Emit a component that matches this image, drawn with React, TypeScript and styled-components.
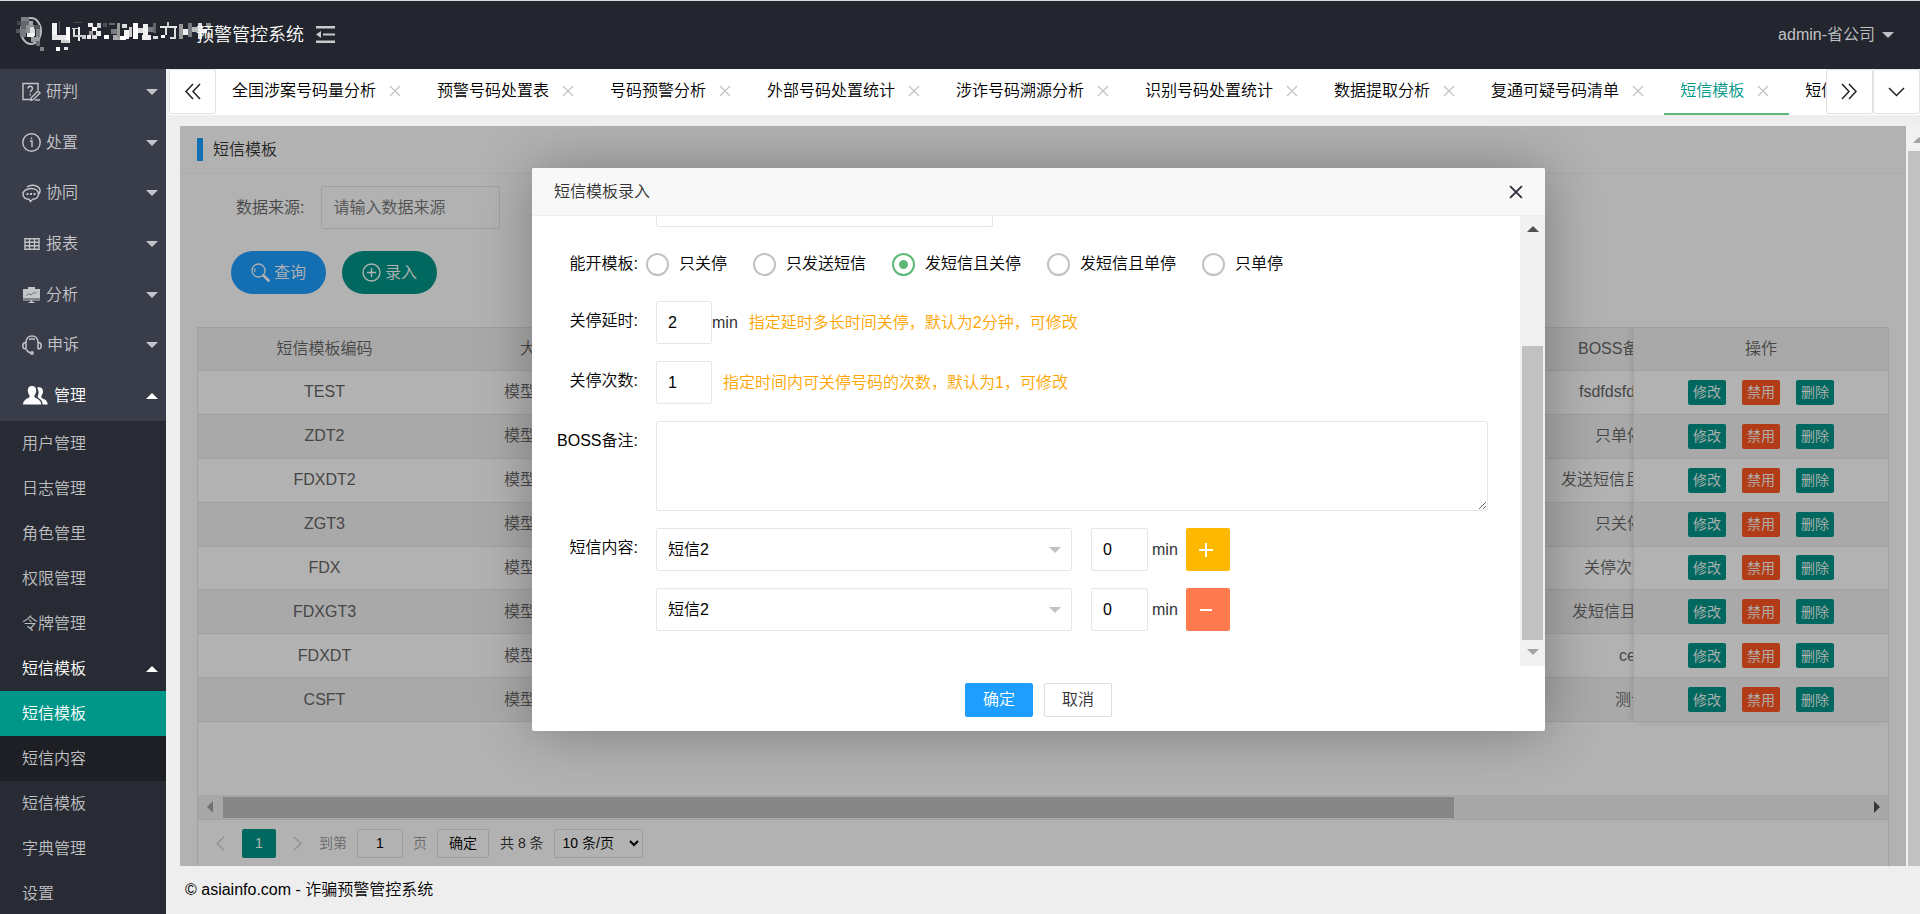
import React, { useState } from 'react';
import styled, { createGlobalStyle, css } from 'styled-components';

const GlobalStyle = createGlobalStyle`
  *, *::before, *::after { box-sizing: border-box; }
  html, body { margin: 0; padding: 0; }
  body {
    background: #eee;
    color: #000;
    font-family: "Liberation Sans", "Noto Sans CJK SC", sans-serif;
    font-size: 16px;
    font-weight: 350;
    line-height: 24px;
  }
  button, input, select, textarea { font: inherit; color: inherit; margin: 0; }
  button { cursor: pointer; }
  a { color: inherit; text-decoration: none; }
  ul { list-style: none; margin: 0; padding: 0; }
`;

/* ---------- frame ---------- */

const Page = styled.div`
  display: flex;
  flex-direction: column;
  height: 100vh;
  overflow: hidden;
`;

const Header = styled.header`
  flex: none;
  display: flex;
  align-items: center;
  height: 69px;
  padding: 0 26px 0 16px;
  border-top: 1px solid #d9dedd;
  background: #23262e;
  color: #fff;
`;

const Brand = styled.h1`
  display: flex;
  align-items: center;
  margin: 0;
  font-size: 18px;
  font-weight: 350;
  line-height: 27px;
  svg { margin-right: -17px; }
`;

const FoldButton = styled.button`
  display: flex;
  margin-left: 12px;
  padding: 0;
  border: 0;
  background: none;
  color: #c9cacc;
`;

const UserButton = styled.button`
  display: flex;
  align-items: center;
  gap: 7px;
  margin-left: auto;
  padding: 0;
  border: 0;
  background: none;
  color: #c1c2c4;
`;

const Caret = styled.span<{ $up?: boolean; $size?: number }>`
  width: 0;
  height: 0;
  border: ${p => p.$size ?? 6}px solid transparent;
  ${p =>
    p.$up
      ? css`border-top-width: 0; border-bottom-color: currentColor;`
      : css`border-bottom-width: 0; border-top-color: currentColor;`}
`;

const Main = styled.div`
  flex: 1;
  display: flex;
  min-height: 0;
`;

/* ---------- sidebar ---------- */

const Sidebar = styled.nav`
  flex: none;
  width: 166px;
  overflow: hidden;
  background: #282b33;
`;

const GroupList = styled.ul`
  display: grid;
  grid-auto-rows: 1fr;
  height: 354px;
  margin-top: -2px;
  background: #393d49;
`;

const navItem = css`
  display: flex;
  align-items: center;
  width: 100%;
  padding: 0 8px 0 22px;
  border: 0;
  background: none;
`;

const GroupButton = styled.button<{ $open?: boolean }>`
  ${navItem}
  height: 100%;
  gap: 5px;
  color: ${p => (p.$open ? '#fff' : '#c4c5c8')};
  ${Caret} { margin-left: auto; }
`;

const SubLink = styled.a<{ $tone?: 'active' | 'deep' | 'open' }>`
  ${navItem}
  height: 45px;
  color: ${p => (p.$tone === 'active' || p.$tone === 'open' ? '#fff' : '#bebfc1')};
  background: ${p => (p.$tone === 'active' ? '#009688' : p.$tone === 'deep' ? '#1e1f24' : 'none')};
  ${Caret} { margin-left: auto; }
`;

/* ---------- tabs ---------- */

const Workspace = styled.div`
  flex: 1;
  display: flex;
  flex-direction: column;
  min-width: 0;
  border-left: 3px solid #f0f0f0;
`;

const TabBar = styled.div`
  flex: none;
  display: flex;
  height: 46px;
  background: #fff;
`;

const TabControl = styled.button`
  flex: none;
  display: flex;
  align-items: center;
  justify-content: center;
  width: 47px;
  height: 45px;
  padding: 0;
  border: 1px solid #e2e2e2;
  border-radius: 2px;
  background: #fff;
  color: #222;
`;

const TabStrip = styled.ul`
  flex: 1;
  display: flex;
  min-width: 0;
  overflow: hidden;
`;

const Tab = styled.li<{ $active?: boolean }>`
  flex: none;
  display: flex;
  align-items: center;
  gap: 13px;
  padding: 0 20px 0 16px;
  white-space: nowrap;
  color: ${p => (p.$active ? '#009688' : '#000')};
  border-bottom: 2px solid ${p => (p.$active ? '#5fb878' : 'transparent')};
`;

const TabClose = styled.button`
  display: flex;
  padding: 0;
  border: 0;
  background: none;
  color: #c2c2c2;
`;

/* ---------- content frame ---------- */

const FrameRow = styled.div`
  flex: 1;
  display: flex;
  min-height: 0;
  padding: 11px 0 0 11px;
`;

const Frame = styled.main`
  position: relative;
  flex: 1;
  display: flex;
  flex-direction: column;
  min-width: 0;
  overflow: hidden;
  background: #fff;
  color: #333;
`;

const FrameScroll = styled.div`
  flex: none;
  display: flex;
  flex-direction: column;
  width: 14px;
  padding-left: 2px;
  overflow: hidden;
  background: #f1f1f1;
  color: #a3a3a3;
  ${Caret} { margin: 11px 0 8px 5px; }
`;

const ScrollThumb = styled.div`
  background: #c1c1c1;
`;

const Footer = styled.footer`
  flex: none;
  height: 48px;
  padding: 0 16px;
  line-height: 48px;
`;

const PanelTitle = styled.h2`
  flex: none;
  display: flex;
  align-items: center;
  height: 48px;
  margin: 0;
  padding-left: 17px;
  border-bottom: 1px solid #f6f6f6;
  font-size: 16px;
  font-weight: 350;
  &::before {
    content: '';
    width: 6px;
    height: 23px;
    margin-right: 10px;
    background: #1e9fff;
  }
`;

const SearchForm = styled.form`
  flex: none;
  display: flex;
  flex-direction: column;
  gap: 22px;
  padding: 12px 51px 33px;
`;

const SearchField = styled.label`
  display: flex;
  align-items: center;
  gap: 17px;
  padding-left: 5px;
  color: #666;
`;

const TextInput = styled.input<{ $width: number }>`
  width: ${p => p.$width}px;
  height: 43px;
  padding: 0 11px;
  border: 1px solid #e6e6e6;
  border-radius: 2px;
  background: #fff;
  outline: 0;
  &::placeholder { color: #757575; opacity: 1; }
`;

const ButtonRow = styled.div`
  display: flex;
  gap: 16px;
`;

const PillButton = styled.button<{ $color: string }>`
  display: flex;
  align-items: center;
  justify-content: center;
  gap: 4px;
  width: 95px;
  height: 43px;
  padding: 0;
  border: 0;
  border-radius: 22px;
  background: ${p => p.$color};
  color: #fff;
`;

/* ---------- data table ---------- */

const TableBox = styled.section`
  flex: 1;
  display: flex;
  flex-direction: column;
  min-height: 0;
  margin: 0 17px;
  border: 1px solid #e6e6e6;
  border-bottom: 0;
`;

const TableBody = styled.div`
  flex: 1;
  display: flex;
  align-items: flex-start;
  min-height: 0;
  overflow: hidden;
`;

const TableClip = styled.div`
  flex: 1;
  min-width: 0;
  overflow: hidden;
`;

const FixedColumn = styled.div`
  flex: none;
  width: 255px;
  border-left: 1px solid #e6e6e6;
  box-shadow: 0 -1px 8px rgba(0, 0, 0, 0.12);
`;

const Table = styled.table`
  width: 100%;
  height: 394px;
  table-layout: fixed;
  border-collapse: separate;
  border-spacing: 0;
  color: #666;
`;

const cell = css`
  height: 43px;
  padding: 0;
  border-bottom: 1px solid #e6e6e6;
  font-weight: 350;
  line-height: 24px;
  text-align: center;
  white-space: nowrap;
`;

const HeadCell = styled.th<{ $width?: number; $indent?: number }>`
  ${cell}
  width: ${p => (p.$width ? `${p.$width}px` : 'auto')};
  ${p => p.$indent !== undefined && css`padding-left: ${p.$indent}px; text-align: left;`}
  background: #f2f2f2;
`;

const Cell = styled.td<{ $indent?: number }>`
  ${cell}
  ${p => p.$indent !== undefined && css`padding-left: ${p.$indent}px; text-align: left;`}
`;

const Row = styled.tr<{ $even?: boolean }>`
  background: ${p => (p.$even ? '#f2f2f2' : '#fff')};
`;

const RowActions = styled.div`
  display: flex;
  justify-content: center;
  gap: 16px;
`;

const SmallButton = styled.button<{ $color: string }>`
  width: 38px;
  height: 25px;
  padding: 0;
  border: 0;
  border-radius: 2px;
  background: ${p => p.$color};
  color: #fff;
  font-size: 14px;
  line-height: 24px;
`;

const HorizontalScroll = styled.div`
  flex: none;
  display: flex;
  align-items: center;
  height: 25px;
  padding: 0 8px 0 9px;
  border-bottom: 1px solid #e6e6e6;
  background: #f1f1f1;
`;

const HTrack = styled.div`
  flex: 1;
  padding: 0 10px;
  ${ScrollThumb} { width: 75%; height: 21px; }
`;

const SideArrow = styled.span<{ $right?: boolean }>`
  border: 6px solid transparent;
  ${p =>
    p.$right
      ? css`border-right-width: 0; border-left-color: #505050;`
      : css`border-left-width: 0; border-right-color: #a3a3a3;`}
`;

const Pager = styled.div`
  flex: none;
  display: flex;
  align-items: center;
  height: 46px;
  padding-left: 18px;
  color: #999;
  font-size: 14px;
`;

const PagerArrow = styled.button`
  display: flex;
  padding: 0;
  border: 0;
  background: none;
  color: #d2d2d2;
`;

const PageNumber = styled.button`
  width: 34px;
  height: 29px;
  margin: 0 17px;
  padding: 0;
  border: 0;
  border-radius: 2px;
  background: #009688;
  color: #fff;
`;

const PagerLabel = styled.label`
  display: flex;
  align-items: center;
  gap: 10px;
  margin-left: 17px;
`;

const pagerBox = css`
  height: 29px;
  border: 1px solid #e2e2e2;
  border-radius: 2px;
  background: #fff;
  color: #000;
`;

const PagerInput = styled.input`
  ${pagerBox}
  width: 46px;
  padding: 0;
  text-align: center;
`;

const PagerButton = styled.button`
  ${pagerBox}
  width: 52px;
  margin: 0 11px 0 10px;
  padding: 0;
`;

const PagerTotal = styled.span`
  color: #333;
`;

const PagerSelect = styled.select`
  ${pagerBox}
  width: 89px;
  margin-left: 10px;
  padding: 0 4px;
`;

/* ---------- dialog ---------- */

const Shade = styled.div`
  position: absolute;
  inset: 0;
  display: flex;
  align-items: flex-start;
  justify-content: center;
  padding: 42px 9px 0 0;
  background: rgba(0, 0, 0, 0.3);
`;

const Dialog = styled.section`
  display: flex;
  flex-direction: column;
  width: 1013px;
  max-width: 100%;
  border-radius: 2px;
  background: #fff;
  color: #000;
  box-shadow: 1px 1px 56px rgba(0, 0, 0, 0.3);
`;

const DialogTitle = styled.header`
  display: flex;
  align-items: center;
  justify-content: space-between;
  height: 48px;
  padding: 0 22px;
  border-bottom: 1px solid #eee;
  border-radius: 2px 2px 0 0;
  background: #f8f8f8;
  color: #333;
`;

const DialogClose = styled.button`
  display: flex;
  padding: 0;
  border: 0;
  background: none;
  color: #2e2d3c;
`;

const DialogBody = styled.div`
  display: flex;
  height: 450px;
  overflow: hidden;
`;

const DialogScroll = styled.div`
  flex: none;
  display: flex;
  flex-direction: column;
  align-items: center;
  width: 25px;
  padding: 10px 0 11px;
  background: #f1f1f1;
  ${ScrollThumb} { width: 21px; height: 294px; margin-top: auto; margin-bottom: 9px; }
`;

const ScrollArrow = styled(Caret)<{ $dim?: boolean }>`
  color: ${p => (p.$dim ? '#a3a3a3' : '#505050')};
`;

const Fields = styled.form`
  flex: 1;
  display: flex;
  flex-direction: column;
  gap: 17px;
  min-width: 0;
  margin-top: -32px;
`;

const FieldRow = styled.div`
  display: flex;
`;

const FieldLabel = styled.label`
  flex: none;
  width: 124px;
  padding-right: 18px;
  line-height: 40px;
  text-align: right;
`;

const FieldContent = styled.div`
  flex: 1;
  display: flex;
  align-items: center;
  min-width: 0;
`;

const RadioGroup = styled(FieldContent)`
  gap: 26px;
  margin-left: -10px;
`;

const RadioLabel = styled.label`
  display: flex;
  align-items: center;
  gap: 10px;
`;

const Radio = styled.input`
  appearance: none;
  width: 23px;
  height: 23px;
  margin: 0;
  border: 2px solid #c2c2c2;
  border-radius: 50%;
  background: #fff;
  &:checked {
    border-color: #5fb878;
    background: radial-gradient(circle, #5fb878 0 4px, #fff 5px);
  }
`;

const Hint = styled.span`
  margin-left: 11px;
  color: #ffa500;
`;

const Unit = styled.span`
  color: #333;
`;

const TextArea = styled.textarea`
  flex: 1;
  height: 90px;
  margin-right: 32px;
  padding: 8px 11px;
  border: 1px solid #e6e6e6;
  border-radius: 2px;
  outline: 0;
  resize: vertical;
`;

const SelectWrap = styled.div`
  display: flex;
  align-items: center;
  width: 416px;
  margin-right: 19px;
`;

const Select = styled.select`
  appearance: none;
  width: 100%;
  height: 43px;
  padding: 0 11px;
  border: 1px solid #e6e6e6;
  border-radius: 2px;
  background: #fff;
  outline: 0;
`;

const SelectCaret = styled(Caret)`
  margin-left: -23px;
  color: #c2c2c2;
  pointer-events: none;
`;

const SmsUnit = styled(Unit)`
  margin: 0 8px 0 4px;
`;

const SquareButton = styled.button<{ $color: string }>`
  display: flex;
  align-items: center;
  justify-content: center;
  width: 44px;
  height: 43px;
  padding: 0 4px 0 0;
  border: 0;
  border-radius: 2px;
  background: ${p => p.$color};
  color: #fff;
`;

const DialogFooter = styled.footer`
  display: flex;
  justify-content: center;
  gap: 11px;
  height: 65px;
  padding-top: 17px;
`;

const DialogButton = styled.button<{ $primary?: boolean }>`
  width: 68px;
  height: 34px;
  padding: 0;
  border: 1px solid ${p => (p.$primary ? '#1e9fff' : '#dedede')};
  border-radius: 2px;
  background: ${p => (p.$primary ? '#1e9fff' : '#fff')};
  color: ${p => (p.$primary ? '#fff' : '#333')};
`;

/* ---------- drawings ---------- */

type Block = [x: number, y: number, w: number, h: number, shade: string];

const logoBlocks: Block[] = [
  [5, 2, 8, 4, '#7d8087'], [1, 6, 4, 4, '#45484f'], [5, 6, 8, 8, '#63666c'], [13, 6, 4, 4, '#a4a5a9'],
  [0, 14, 4, 4, '#55585e'], [4, 14, 6, 8, '#777a80'], [10, 10, 8, 8, '#8d8f94'], [14, 12, 5, 9, '#dedede'],
  [11, 18, 7, 4, '#f1f1f1'], [18, 10, 6, 4, '#53565c'], [20, 14, 4, 8, '#7d8085'], [15, 22, 9, 5, '#9b9da1'],
  [20, 26, 4, 5, '#6a6d73'], [24, 32, 4, 4, '#7d8086'],
  [36, 8, 5, 17, '#f4f4f4'], [36, 20, 18, 5, '#e8e8e8'], [43, 6, 1, 12, '#585b61'], [50, 12, 4, 16, '#fff'],
  [40, 32, 4, 4, '#fff'], [48, 32, 4, 3, '#e2e2e2'], [45, 25, 8, 3, '#cfcfcf'],
  [56, 13, 8, 1, '#ccc'], [57, 14, 2, 7, '#ddd'], [62, 12, 2, 14, '#f0f0f0'], [57, 20, 9, 2, '#ccc'], [58, 7, 8, 1, '#45484f'],
  [66, 20, 4, 4, '#ccc'], [71, 20, 4, 4, '#eee'], [72, 8, 5, 4, '#eee'], [76, 12, 5, 4, '#fff'], [81, 8, 4, 5, '#ccc'],
  [80, 16, 5, 5, '#eee'], [73, 16, 4, 4, '#999'], [76, 20, 5, 4, '#ddd'], [87, 8, 4, 4, '#4c4f56'], [88, 20, 5, 4, '#fff'],
  [93, 8, 6, 2, '#666'], [95, 14, 6, 5, '#777a80'], [97, 20, 7, 5, '#aaa'], [101, 8, 3, 15, '#999'],
  [106, 9, 5, 4, '#ddd'], [108, 15, 5, 9, '#f4f4f4'], [113, 12, 3, 10, '#ccc'], [104, 21, 6, 4, '#fff'],
  [117, 8, 5, 16, '#fff'], [122, 13, 5, 5, '#ddd'], [127, 9, 5, 12, '#f1f1f1'], [126, 20, 9, 5, '#eee'],
  [132, 12, 5, 5, '#777a80'], [137, 8, 3, 10, '#63666c'], [137, 21, 5, 3, '#ddd'],
  [144, 11, 17, 2, '#e8e8e8'], [151, 7, 2, 6, '#ccc'], [149, 13, 2, 7, '#ddd'], [145, 20, 4, 3, '#fff'], [158, 13, 2, 11, '#ddd'],
  [154, 22, 5, 2, '#ddd'], [163, 9, 4, 15, '#999'], [167, 14, 5, 6, '#eee'], [172, 8, 4, 14, '#777a80'],
  [176, 12, 6, 5, '#bbb'], [182, 8, 4, 16, '#ddd'], [186, 14, 5, 4, '#f0f0f0'], [190, 8, 5, 5, '#888'], [191, 18, 5, 5, '#999'],
];

const BrandMosaic = () => (
  <svg width="197" height="40" viewBox="0 0 197 40" aria-hidden="true">
    <ellipse cx="15" cy="16" rx="10" ry="13" fill="none" stroke="#b9babd" strokeWidth="2" />
    {logoBlocks.map(([x, y, w, h, shade], i) => (
      <rect key={i} x={x} y={y} width={w} height={h} fill={shade} />
    ))}
  </svg>
);

const FoldIcon = () => (
  <svg width="20" height="18" viewBox="0 0 20 18" fill="currentColor" aria-hidden="true">
    <path d="M0 0h19v2.500H0zM7 7.500h12v2H7zM0 14.500h19V17H0zM0 8.500 5 5v7z" />
  </svg>
);

const CrossIcon = ({ size = 12, stroke = 1.2 }: { size?: number; stroke?: number }) => (
  <svg width={size} height={size} viewBox="0 0 12 12" stroke="currentColor" strokeWidth={stroke} fill="none" aria-hidden="true">
    <path d="M1 1l10 10M11 1L1 11" />
  </svg>
);

const ChevronIcon = ({ kind }: { kind: 'first' | 'last' | 'down' | 'prev' | 'next' }) => {
  const shapes = {
    first: 'M9 1 2 8.500 9 16M16 1 9 8.500 16 16',
    last: 'M1 1l7 7.500L1 16M8 1l7 7.500L8 16',
    down: 'M1 5l7.500 7.500L16 5',
    prev: 'M8 2 1 8.500 8 15',
    next: 'M1 2l7 6.500L1 15',
  };
  const width = kind === 'prev' || kind === 'next' ? 9 : 17;
  return (
    <svg width={width} height="17" viewBox={`0 0 ${width} 17`} fill="none" stroke="currentColor" strokeWidth="1.500" aria-hidden="true">
      <path d={shapes[kind]} />
    </svg>
  );
};

const SearchIcon = () => (
  <svg width="19" height="19" viewBox="0 0 19 19" fill="none" stroke="currentColor" strokeWidth="1.300" aria-hidden="true">
    <circle cx="7.500" cy="7.500" r="6.500" />
    <path d="M4 9a4 4 0 0 1 0-3.500" />
    <path d="M12.500 12.500l5 5" strokeWidth="2.600" strokeLinecap="round" />
  </svg>
);

const AddCircleIcon = () => (
  <svg width="19" height="19" viewBox="0 0 19 19" fill="none" stroke="currentColor" strokeWidth="1.400" aria-hidden="true">
    <circle cx="9.500" cy="9.500" r="8.500" />
    <path d="M9.500 5v9M5 9.500h9" />
  </svg>
);

const SignIcon = ({ plus }: { plus?: boolean }) => (
  <svg width="14" height="14" viewBox="0 0 14 14" stroke="currentColor" strokeWidth="2" aria-hidden="true">
    <path d={plus ? 'M0 7h14M7 0v14' : 'M1 7h12'} />
  </svg>
);

const navIcons: Record<string, React.ReactNode> = {
  研判: (
    <svg width="19" height="20" viewBox="0 0 19 20" fill="none" stroke="currentColor" strokeWidth="1.400">
      <path d="M16 8V1.500H1v16h9" />
      <path d="M6 6.500c0-3 4.500-3 4.500 0 0 1.700-2.200 1.800-2.200 4M8.300 12v1.600" />
      <path d="M9.500 15.500 16 9l2 2-6.500 6.500-2.500.800z" />
      <path d="M13 18h5" />
    </svg>
  ),
  处置: (
    <svg width="19" height="19" viewBox="0 0 19 19" fill="none" stroke="currentColor" strokeWidth="1.400">
      <circle cx="9.500" cy="9.500" r="8.700" />
      <path d="M8 8h2v6M9.500 4.500v1.800" />
    </svg>
  ),
  协同: (
    <svg width="19" height="19" viewBox="0 0 19 19" fill="none" stroke="currentColor" strokeWidth="1.400">
      <path d="M9 4.500c4.500 0 7.500 2.300 7.500 5.500s-2.500 5-6 5.300L8.500 17.500 7 15.300C3.500 15 1 13 1 10s3.500-5.500 8-5.500z" />
      <path d="M5 3c4-3 12-2 13 3 .3 2-.5 3.500-1.500 4.500" />
      <path d="M4.500 10h2M8 10h2M11.500 10h2" strokeWidth="2" />
    </svg>
  ),
  报表: (
    <svg width="19" height="14" viewBox="0 0 19 14" fill="none" stroke="currentColor" strokeWidth="1.400">
      <path d="M3 1.700h14v10.600H3zM3 5.200h14M3 8.700h14M7.500 1v12M12.500 1v12" />
    </svg>
  ),
  分析: (
    <svg width="19" height="16" viewBox="0 0 19 16" fill="currentColor">
      <path d="M6 0h7v2h5v9.500H1V2h5zM1 12.500h17v1H1zM8.500 13h2v2h2v1h-6v-1h2z" />
      <path d="M4.500 8.500l2.500-2 2 1.500 2.500-2.500 1.500 1 2-2" fill="none" stroke="#6f727b" />
    </svg>
  ),
  申诉: (
    <svg width="20" height="20" viewBox="0 0 20 20" fill="none" stroke="currentColor" strokeWidth="1.500">
      <path d="M4 14V7.500C4 3.500 6.500 1 10 1s6 2.500 6 6.500V14M4 7.500C1 7.500.8 9 .8 10.700S1 14 4 14M16 7.500c3 0 3.200 1.500 3.200 3.200S19 14 16 14M4.500 14.500c1 2.500 2.500 3.300 4.500 3.600" />
      <circle cx="10" cy="18" r="1.200" />
      <path d="M7 4.500c2-1 4-1 6 0" />
    </svg>
  ),
  管理: (
    <svg width="27" height="19" viewBox="0 0 27 19" fill="currentColor">
      <path d="M10 0c3 0 4.200 2 4.200 4.500 0 2-.7 3.500-1.700 4.700v2c2 1.300 6.500 2.300 6.800 7.300H1c.3-5 4.500-6 6.500-7.300v-2C6.500 8 5.800 6.500 5.800 4.500 5.800 2 7 0 10 0z" />
      <path d="M15 1.800c3-1.300 6 .2 6 3.700 0 1.800-.8 3.200-1.600 4.200v2c2 1.200 6 2 6.400 6.800h-5.200c-.2-3.700-2-5.300-4.800-6.900V10c1-1.500 1.400-5-.8-8.200z" />
    </svg>
  ),
};

/* ---------- data ---------- */

const groups = ['研判', '处置', '协同', '报表', '分析', '申诉', '管理'];

const subItems: { label: string; tone?: 'active' | 'deep' | 'open' }[] = [
  { label: '用户管理' },
  { label: '日志管理' },
  { label: '角色管里' },
  { label: '权限管理' },
  { label: '令牌管理' },
  { label: '短信模板', tone: 'open' },
  { label: '短信模板', tone: 'active' },
  { label: '短信内容', tone: 'deep' },
  { label: '短信模板' },
  { label: '字典管理' },
  { label: '设置' },
];

const tabs = [
  '全国涉案号码量分析',
  '预警号码处置表',
  '号码预警分析',
  '外部号码处置统计',
  '涉诈号码溯源分析',
  '识别号码处置统计',
  '数据提取分析',
  '复通可疑号码清单',
  '短信模板',
  '短信',
];
const activeTab = 8;

const rows: { code: string; note: string; indent: number }[] = [
  { code: 'TEST', note: 'fsdfdsfd', indent: 46 },
  { code: 'ZDT2', note: '只单停', indent: 62 },
  { code: 'FDXDT2', note: '发送短信且', indent: 28 },
  { code: 'ZGT3', note: '只关停', indent: 62 },
  { code: 'FDX', note: '关停次数', indent: 51 },
  { code: 'FDXGT3', note: '发短信且', indent: 39 },
  { code: 'FDXDT', note: 'ce', indent: 86 },
  { code: 'CSFT', note: '测试', indent: 82 },
];

const modes = ['只关停', '只发送短信', '发短信且关停', '发短信且单停', '只单停'];

const SmsRow = ({ first }: { first?: boolean }) => {
  const id = first ? 'sms-1' : 'sms-2';
  return (
    <FieldRow>
      <FieldLabel htmlFor={id}>{first ? '短信内容:' : ''}</FieldLabel>
      <FieldContent>
        <SelectWrap>
          <Select id={id} aria-label="短信内容">
            <option>短信2</option>
          </Select>
          <SelectCaret />
        </SelectWrap>
        <TextInput $width={57} defaultValue="0" aria-label="间隔" />
        <SmsUnit>min</SmsUnit>
        <SquareButton type="button" $color={first ? '#ffb800' : '#ff7a4f'} aria-label={first ? '增加' : '减少'}>
          <SignIcon plus={first} />
        </SquareButton>
      </FieldContent>
    </FieldRow>
  );
};

const TemplateDialog = () => {
  const [mode, setMode] = useState(modes[2]);
  return (
    <Shade>
      <Dialog role="dialog" aria-label="短信模板录入">
        <DialogTitle>
          短信模板录入
          <DialogClose aria-label="关闭">
            <CrossIcon size={14} stroke={1.6} />
          </DialogClose>
        </DialogTitle>
        <DialogBody>
          <Fields>
            <FieldRow>
              <FieldLabel as="span" />
              <TextInput $width={337} aria-label="模板编码" />
            </FieldRow>
            <FieldRow>
              <FieldLabel as="span">能开模板:</FieldLabel>
              <RadioGroup role="radiogroup" aria-label="能开模板">
                {modes.map(m => (
                  <RadioLabel key={m}>
                    <Radio type="radio" name="mode" checked={mode === m} onChange={() => setMode(m)} />
                    {m}
                  </RadioLabel>
                ))}
              </RadioGroup>
            </FieldRow>
            <FieldRow>
              <FieldLabel htmlFor="delay">关停延时:</FieldLabel>
              <FieldContent>
                <TextInput id="delay" $width={56} defaultValue="2" />
                <Unit>min</Unit>
                <Hint>指定延时多长时间关停，默认为2分钟，可修改</Hint>
              </FieldContent>
            </FieldRow>
            <FieldRow>
              <FieldLabel htmlFor="times">关停次数:</FieldLabel>
              <FieldContent>
                <TextInput id="times" $width={56} defaultValue="1" />
                <Hint>指定时间内可关停号码的次数，默认为1，可修改</Hint>
              </FieldContent>
            </FieldRow>
            <FieldRow>
              <FieldLabel htmlFor="note">BOSS备注:</FieldLabel>
              <FieldContent>
                <TextArea id="note" />
              </FieldContent>
            </FieldRow>
            <SmsRow first />
            <SmsRow />
          </Fields>
          <DialogScroll>
            <ScrollArrow $up />
            <ScrollThumb />
            <ScrollArrow $dim />
          </DialogScroll>
        </DialogBody>
        <DialogFooter>
          <DialogButton $primary>确定</DialogButton>
          <DialogButton>取消</DialogButton>
        </DialogFooter>
      </Dialog>
    </Shade>
  );
};

const TemplateTable = () => (
  <TableBox>
    <TableBody>
      <TableClip>
        <Table>
          <thead>
            <tr>
              <HeadCell $width={253}>短信模板编码</HeadCell>
              <HeadCell $indent={69}>大</HeadCell>
              <HeadCell $width={100} $indent={45}>BOSS备</HeadCell>
            </tr>
          </thead>
          <tbody>
            {rows.map((r, i) => (
              <Row key={r.code} $even={i % 2 === 1}>
                <Cell>{r.code}</Cell>
                <Cell $indent={53}>模型</Cell>
                <Cell $indent={r.indent}>{r.note}</Cell>
              </Row>
            ))}
          </tbody>
        </Table>
      </TableClip>
      <FixedColumn>
        <Table>
          <thead>
            <tr>
              <HeadCell>操作</HeadCell>
            </tr>
          </thead>
          <tbody>
            {rows.map((r, i) => (
              <Row key={r.code} $even={i % 2 === 1}>
                <Cell>
                  <RowActions>
                    <SmallButton $color="#009688">修改</SmallButton>
                    <SmallButton $color="#ff5722">禁用</SmallButton>
                    <SmallButton $color="#009688">删除</SmallButton>
                  </RowActions>
                </Cell>
              </Row>
            ))}
          </tbody>
        </Table>
      </FixedColumn>
    </TableBody>
    <HorizontalScroll>
      <SideArrow />
      <HTrack>
        <ScrollThumb />
      </HTrack>
      <SideArrow $right />
    </HorizontalScroll>
    <Pager>
      <PagerArrow aria-label="上一页"><ChevronIcon kind="prev" /></PagerArrow>
      <PageNumber>1</PageNumber>
      <PagerArrow aria-label="下一页"><ChevronIcon kind="next" /></PagerArrow>
      <PagerLabel>
        到第
        <PagerInput defaultValue="1" />
        页
      </PagerLabel>
      <PagerButton>确定</PagerButton>
      <PagerTotal>共 8 条</PagerTotal>
      <PagerSelect aria-label="每页条数">
        <option>10 条/页</option>
      </PagerSelect>
    </Pager>
  </TableBox>
);

export default function App() {
  return (
    <Page>
      <GlobalStyle />
      <Header>
        <Brand>
          <BrandMosaic />
          预警管控系统
        </Brand>
        <FoldButton aria-label="收起菜单"><FoldIcon /></FoldButton>
        <UserButton>
          admin-省公司
          <Caret />
        </UserButton>
      </Header>
      <Main>
        <Sidebar>
          <GroupList>
            {groups.map(g => (
              <li key={g}>
                <GroupButton $open={g === '管理'}>
                  {navIcons[g]}
                  {g}
                  <Caret $up={g === '管理'} />
                </GroupButton>
              </li>
            ))}
          </GroupList>
          <ul>
            {subItems.map((s, i) => (
              <li key={i}>
                <SubLink href="#" $tone={s.tone}>
                  {s.label}
                  {s.tone === 'open' && <Caret $up />}
                </SubLink>
              </li>
            ))}
          </ul>
        </Sidebar>
        <Workspace>
          <TabBar>
            <TabControl aria-label="向左"><ChevronIcon kind="first" /></TabControl>
            <TabStrip>
              {tabs.map((t, i) => (
                <Tab key={t} $active={i === activeTab}>
                  {t}
                  {i <= activeTab && <TabClose aria-label="关闭标签"><CrossIcon /></TabClose>}
                </Tab>
              ))}
            </TabStrip>
            <TabControl aria-label="向右"><ChevronIcon kind="last" /></TabControl>
            <TabControl aria-label="更多"><ChevronIcon kind="down" /></TabControl>
          </TabBar>
          <FrameRow>
            <Frame>
              <PanelTitle>短信模板</PanelTitle>
              <SearchForm>
                <SearchField>
                  数据来源:
                  <TextInput $width={179} placeholder="请输入数据来源" />
                </SearchField>
                <ButtonRow>
                  <PillButton type="button" $color="#1e9fff"><SearchIcon />查询</PillButton>
                  <PillButton type="button" $color="#009688"><AddCircleIcon />录入</PillButton>
                </ButtonRow>
              </SearchForm>
              <TemplateTable />
              <TemplateDialog />
            </Frame>
            <FrameScroll>
              <Caret $up />
              <ScrollThumb style={{ flex: 1 }} />
            </FrameScroll>
          </FrameRow>
          <Footer>© asiainfo.com - 诈骗预警管控系统</Footer>
        </Workspace>
      </Main>
    </Page>
  );
}
